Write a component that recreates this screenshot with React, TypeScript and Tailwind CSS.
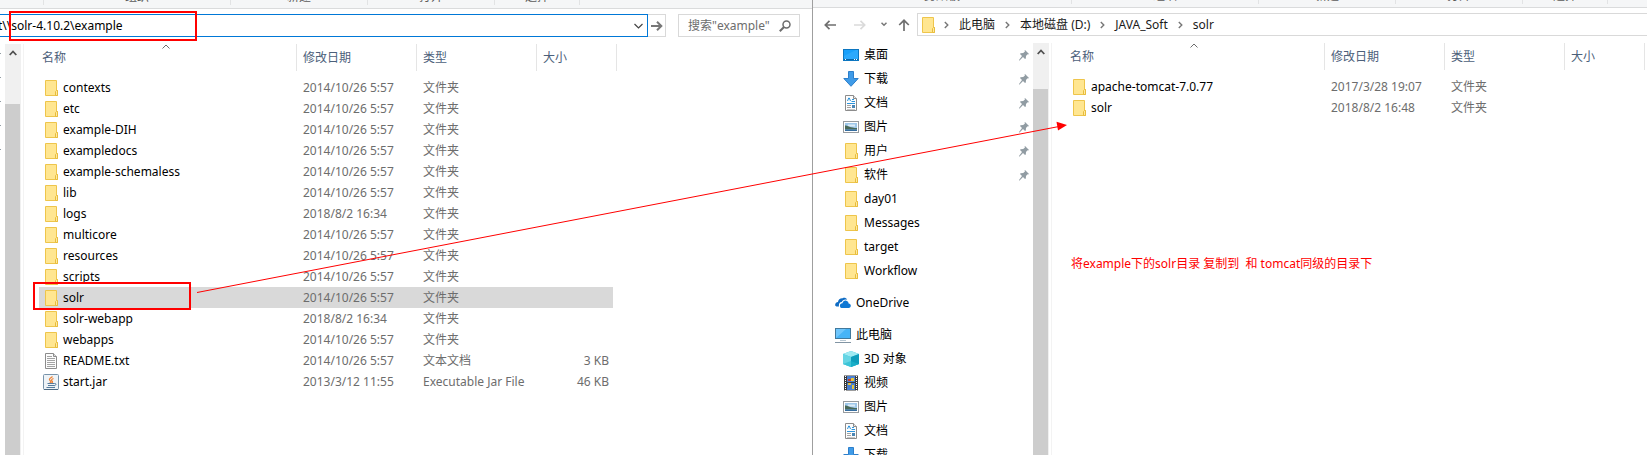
import type { ReactNode } from "react";

type IconName =
  | "folder" | "text" | "jar" | "desktop" | "download" | "document"
  | "picture" | "onedrive" | "pc" | "cube" | "video";

type FileRow = {
  name: string;
  date: string;
  type: string;
  size?: string;
  icon?: IconName;
  selected?: boolean;
};

const exampleFiles: FileRow[] = [
  { name: "contexts", date: "2014/10/26 5:57", type: "文件夹" },
  { name: "etc", date: "2014/10/26 5:57", type: "文件夹" },
  { name: "example-DIH", date: "2014/10/26 5:57", type: "文件夹" },
  { name: "exampledocs", date: "2014/10/26 5:57", type: "文件夹" },
  { name: "example-schemaless", date: "2014/10/26 5:57", type: "文件夹" },
  { name: "lib", date: "2014/10/26 5:57", type: "文件夹" },
  { name: "logs", date: "2018/8/2 16:34", type: "文件夹" },
  { name: "multicore", date: "2014/10/26 5:57", type: "文件夹" },
  { name: "resources", date: "2014/10/26 5:57", type: "文件夹" },
  { name: "scripts", date: "2014/10/26 5:57", type: "文件夹" },
  { name: "solr", date: "2014/10/26 5:57", type: "文件夹", selected: true },
  { name: "solr-webapp", date: "2018/8/2 16:34", type: "文件夹" },
  { name: "webapps", date: "2014/10/26 5:57", type: "文件夹" },
  { name: "README.txt", date: "2014/10/26 5:57", type: "文本文档", size: "3 KB", icon: "text" },
  { name: "start.jar", date: "2013/3/12 11:55", type: "Executable Jar File", size: "46 KB", icon: "jar" },
];

const targetFiles: FileRow[] = [
  { name: "apache-tomcat-7.0.77", date: "2017/3/28 19:07", type: "文件夹" },
  { name: "solr", date: "2018/8/2 16:48", type: "文件夹" },
];

const quickAccess: { label: string; icon: IconName; pinned?: boolean }[] = [
  { label: "桌面", icon: "desktop", pinned: true },
  { label: "下载", icon: "download", pinned: true },
  { label: "文档", icon: "document", pinned: true },
  { label: "图片", icon: "picture", pinned: true },
  { label: "用户", icon: "folder", pinned: true },
  { label: "软件", icon: "folder", pinned: true },
  { label: "day01", icon: "folder" },
  { label: "Messages", icon: "folder" },
  { label: "target", icon: "folder" },
  { label: "Workflow", icon: "folder" },
];

const thisPc: { label: string; icon: IconName }[] = [
  { label: "3D 对象", icon: "cube" },
  { label: "视频", icon: "video" },
  { label: "图片", icon: "picture" },
  { label: "文档", icon: "document" },
  { label: "下载", icon: "download" },
];

const drawings: Record<IconName, ReactNode> = {
  folder: (
    <>
      <path d="M2.5.5h11v10h1v5h-12z" fill="#ffe691" stroke="#eec54b" />
      <path d="M12.5 15.5v-4l1-1h1v5z" fill="#ffe9a0" stroke="#e8bd3c" />
    </>
  ),
  text: (
    <>
      <path d="M2.5.5h8l3 3v12h-11z" fill="#fcfcfc" stroke="#8c8c8c" />
      <path d="M10.5.5v3h3" fill="#ddd" stroke="#8c8c8c" />
      <path d="M4 3.5h5M4 5.5h8M4 7.5h8M4 9.5h8M4 11.5h8M4 13.5h8" stroke="#a3a3a3" />
    </>
  ),
  jar: (
    <>
      <rect x=".5" y=".5" width="15" height="15" rx="1" fill="#eef3f7" stroke="#7793aa" />
      <path d="M1 15.5h14" stroke="#4d6a83" />
      <path d="M9.5 2.5C7 4.5 5.5 5 7 6.5s1 2-.5 2.500M10.500 4.500C8.500 5.500 8 6 9 7s.5 1.500-.5 2" fill="none" stroke="#ee8133" strokeWidth="1.200" />
      <path d="M4.500 9.500h7M5 11.500h6M3.500 13.500h8.500" stroke="#557b9c" strokeWidth="1.200" />
      <path d="M11.500 9.500c2-.5 2 2-.5 2.300" fill="none" stroke="#557b9c" />
    </>
  ),
  desktop: (
    <>
      <rect x=".5" y="2.500" width="15" height="11" fill="#18a0fb" stroke="#0c76c0" />
      <path d="M1 9 13 3h2v9H1z" fill="#42b4ff" opacity=".45" />
      <path d="M1 12.500h14" stroke="#0866a8" />
      <path d="M2 12.500h1M11 12.500h1M13 12.500h1" stroke="#fff" />
    </>
  ),
  download: <path d="M5.500.5h5v7h4.700L8 15.300.8 7.500h4.700z" fill="#3f9be8" stroke="#2d7fcb" />,
  document: (
    <>
      <path d="M2.500.5h8l3 3v12h-11z" fill="#fdfdfd" stroke="#8c8c8c" />
      <path d="M10.500.5v3h3" fill="#e8e8e8" stroke="#8c8c8c" />
      <path d="m4.500 6 1.200-3h.6l1.200 3M9 4.500h2M8.500 6.500H12M4 8.500h8" fill="none" stroke="#2d94dc" />
      <path d="M4 10.500h4M4 12.500h4" stroke="#a3a3a3" />
      <path d="M9 10h3v3H9z" fill="#4a86b5" />
      <path d="M4 14.500h8" stroke="#c8c8c8" />
    </>
  ),
  picture: (
    <>
      <rect x=".5" y="2.500" width="15" height="11" fill="#fff" stroke="#979ca0" />
      <path d="M2 4h12v8H2z" fill="#9fc8ea" />
      <path d="M5 5.500h7v2H5z" fill="#dcecf7" />
      <path d="M2 6.500c3 0 5 2.500 12 2.500v1.500H2z" fill="#4a6a58" />
      <path d="M2 10.500h12V12H2z" fill="#356d9f" />
    </>
  ),
  onedrive: (
    <>
      <path d="M.3 10.800C-.3 8.500 1.300 7 3 7c.2-2.300 2.300-4 4.700-3.700 1-.8 3.500-.6 4.500 1.400-2.600-.8-4.700.3-5.500 2.300C4.500 7 3.500 9 4 11.500H1.500z" fill="#0f6cc4" />
      <path d="M5 11c-.3-1.800 1-3 2.500-2.800C7.900 6 9.800 5.200 11.300 5.700c1.500.4 2.300 1.600 2.300 2.800 2.900.1 3 4.400 0 4.500H6.500C5.600 13 5 12 5 11z" fill="#0f78d4" />
    </>
  ),
  pc: (
    <>
      <rect x=".5" y="1.500" width="15" height="10" fill="#47b4f7" stroke="#42799c" />
      <path d="M1 2h10L1 11z" fill="#8bd2ff" opacity=".6" />
      <path d="M5 13.500h6" stroke="#b9c8d3" />
      <path d="M0 15.500h16" stroke="#8295a4" />
    </>
  ),
  cube: (
    <>
      <path d="m8 0 8 3v10l-8 3-8-3V3z" fill="#35c3dc" />
      <path d="m8 0 8 3-8 3-8-3z" fill="#9feaf2" />
      <path d="m0 3 8 3v10l-8-3z" fill="#66d5e4" />
      <path d="m8 6 8-3v10l-8 3z" fill="#0e9dbb" />
      <path d="m0 13 8-3 8 3-8 3z" fill="#22b9cf" opacity=".6" />
    </>
  ),
  video: (
    <>
      <path d="M1 .5h14v15H1z" fill="#3a3a3a" />
      <path d="M4 1h8v6H4zM4 8h8v7H4z" fill="#4a7fd0" />
      <path d="M5 4h3v2H5z" fill="#c93b2c" />
      <path d="M8 3h3v3H8zM5 8h3v2H5zM9 10h2v4H9z" fill="#e8c53a" />
      <path d="M2.500 1v15M13.500 1v15" stroke="#fff" strokeDasharray="1 1" />
    </>
  ),
};

function Icon({ name }: { name: IconName }) {
  return (
    <svg viewBox="0 0 16 16" className="size-4 shrink-0" aria-hidden="true">
      {drawings[name]}
    </svg>
  );
}

function Pin() {
  return (
    <svg viewBox="0 0 10 11" className="h-[11px] w-2.5 shrink-0" aria-hidden="true">
      <path d="M6 0 10 4 9 4.500 8.500 4.300 7 6 6.800 8.500 6 9 4 7 .6 10.600 0 10.400l.2-.6L3 6 1 4l.6-.8 2.600-.2L6 1.500 5.500.8z" fill="#919ca3" />
    </svg>
  );
}

function ScrollUp() {
  return (
    <svg viewBox="0 0 8 6" className="h-1.5 w-2" aria-hidden="true">
      <path d="m.7 5 3.300-3.500L7.300 5" fill="none" stroke="#505050" strokeWidth="1.800" />
    </svg>
  );
}

function Crumb() {
  return (
    <svg viewBox="0 0 5 8" className="h-2 w-[5px] shrink-0" aria-hidden="true">
      <path d="m.8 1 3 3-3 3" fill="none" stroke="#777" strokeWidth="1.400" />
    </svg>
  );
}

function Ribbon({ children, className }: { children: ReactNode; className: string }) {
  return (
    <div className={`flex shrink-0 items-end overflow-hidden border-b border-[#dadbdc] bg-[#f5f6f7] text-[#5a5a5a] ${className}`}>
      {children}
    </div>
  );
}

function RibbonGroup({ label, className }: { label?: string; className: string }) {
  return (
    <div className={`mb-[3px] flex h-5 shrink-0 items-end justify-center border-r border-[#e2e3e4] leading-4 ${className}`}>
      {label}
    </div>
  );
}

function FileTable({ label, rows, nameWidth }: { label: string; rows: FileRow[]; nameWidth: string }) {
  const head = "border-r border-[#e5e5e5] p-0 pl-1.5 text-left font-normal";
  return (
    <table className="table-fixed border-separate border-spacing-0 self-start" aria-label={label}>
      <colgroup>
        <col className={nameWidth} />
        <col className="w-[120px]" />
        <col className="w-[120px]" />
        <col className="w-[80px]" />
      </colgroup>
      <thead>
        <tr className="h-[27px] text-[#4c607a]">
          <th className="relative border-r border-[#e5e5e5] p-0 pl-[3px] text-left font-normal">
            名称
            <svg viewBox="0 0 8 5" className="absolute top-0 left-1/2 h-[5px] w-2 -translate-x-1.5" aria-hidden="true">
              <path d="m.5 4.500 3.500-3.500 3.500 3.500" fill="none" stroke="#6d6d6d" />
            </svg>
          </th>
          <th className={head}>修改日期</th>
          <th className={head}>类型</th>
          <th className={head}>大小</th>
        </tr>
      </thead>
      <tbody className="text-[#6d6d6d] before:block before:h-1.5">
        {rows.map((row) => {
          const fill = row.selected ? "bg-[#d9d9d9]" : "";
          return (
            <tr key={row.name}>
              <td className="p-0">
                <div className={`flex h-[21px] items-center gap-1 pl-1 text-black ${fill}`}>
                  <Icon name={row.icon ?? "folder"} />
                  {row.name}
                </div>
              </td>
              <td className="p-0">
                <div className={`flex h-[21px] items-center pl-1.5 ${fill}`}>{row.date}</div>
              </td>
              <td className="p-0">
                <div className={`flex h-[21px] items-center pl-1.5 ${fill}`}>{row.type}</div>
              </td>
              <td className="p-0 pr-1">
                <div className={`flex h-[21px] items-center justify-end pr-1 ${fill}`}>{row.size}</div>
              </td>
            </tr>
          );
        })}
      </tbody>
    </table>
  );
}

function SourceWindow() {
  return (
    <section className="flex min-w-0 flex-col overflow-hidden border-r border-[#9f9f9f]">
      <Ribbon className="h-[9px]">
        <RibbonGroup className="w-11" />
        <RibbonGroup label="组织" className="w-[187px]" />
        <RibbonGroup label="新建" className="w-[137px]" />
        <RibbonGroup label="打开" className="w-[127px]" />
        <RibbonGroup label="选择" className="w-[85px]" />
      </Ribbon>
      <div className="mt-[5px] flex h-[23px] shrink-0 pr-3">
        <div className="-ml-1 flex min-w-0 flex-1 items-center border border-[#0078d7] pr-1">
          <input
            aria-label="地址"
            defaultValue={"t\\\\solr-4.10.2\\example"}
            className="min-w-0 flex-1 pl-px text-black outline-none"
          />
          <svg viewBox="0 0 9 6" className="h-1.5 w-[9px]" aria-hidden="true">
            <path d="m.5 1 4 4 4-4" fill="none" stroke="#444" strokeWidth="1.200" />
          </svg>
        </div>
        <button aria-label="转到" className="mr-3 flex w-[18px] items-center justify-center border border-l-0 border-[#d9d9d9]">
          <svg viewBox="0 0 12 10" className="h-2.5 w-3" aria-hidden="true">
            <path d="M0 5h10M6 .8 10.300 5 6 9.200" fill="none" stroke="#777" strokeWidth="2" />
          </svg>
        </button>
        <label className="flex w-[122px] items-center border border-[#d9d9d9] pr-2 pl-[9px]">
          <input
            type="text"
            aria-label="搜索"
            placeholder={'搜索"example"'}
            className="min-w-0 flex-1 outline-none placeholder:text-[#6d6d6d]"
          />
          <svg viewBox="0 0 12 12" className="size-3 shrink-0" aria-hidden="true">
            <circle cx="7.500" cy="4.500" r="3.500" fill="none" stroke="#6d6d6d" strokeWidth="1.500" />
            <path d="M5 7 .8 11.200" stroke="#6d6d6d" strokeWidth="2" />
          </svg>
        </label>
      </div>
      <div className="mt-[7px] flex min-h-0 flex-1">
        <div className="w-[5px] shrink-0 overflow-hidden">
          <div className="flex flex-col gap-[23px] pt-[9px]">
            {[0, 1, 2, 3, 4].map((n) => (
              <span key={n} className="h-px w-px bg-[#919ca3]" />
            ))}
          </div>
        </div>
        <div className="flex w-4 shrink-0 flex-col bg-[#f0f0f0]">
          <div className="flex h-[60px] justify-center pt-1.5"><ScrollUp /></div>
          <div className="mr-px flex-1 bg-[#cdcdcd]" />
        </div>
        <div className="mr-[15px] ml-0.5 w-px shrink-0 bg-[#f3f3f3]" />
        <FileTable label="example" rows={exampleFiles} nameWidth="w-[258px]" />
      </div>
    </section>
  );
}

function TargetWindow() {
  return (
    <section className="flex min-w-0 flex-col overflow-hidden">
      <Ribbon className="h-2">
        <RibbonGroup label="剪贴板" className="w-[259px]" />
        <RibbonGroup label="组织" className="w-[187px]" />
        <RibbonGroup label="新建" className="w-[137px]" />
        <RibbonGroup label="打开" className="w-[127px]" />
        <RibbonGroup label="选择" className="w-[85px]" />
      </Ribbon>
      <div className="mt-[5px] flex h-[23px] shrink-0 items-center">
        <button aria-label="后退" className="ml-[11px]">
          <svg viewBox="0 0 12 10" className="h-2.5 w-3" aria-hidden="true">
            <path d="M12 5H1.500M5.500.8 1.300 5l4.200 4.200" fill="none" stroke="#6f6f6f" strokeWidth="1.700" />
          </svg>
        </button>
        <button aria-label="前进" className="ml-[18px]">
          <svg viewBox="0 0 12 10" className="h-2.5 w-3" aria-hidden="true">
            <path d="M0 5h10.500M6.500.8 10.700 5 6.500 9.200" fill="none" stroke="#dadada" strokeWidth="1.700" />
          </svg>
        </button>
        <button aria-label="最近浏览的位置" className="ml-[15px]">
          <svg viewBox="0 0 6 5" className="h-[5px] w-1.5" aria-hidden="true">
            <path d="m.5.8 2.500 2.500L5.500.8" fill="none" stroke="#777" strokeWidth="1.500" />
          </svg>
        </button>
        <button aria-label="上移" className="ml-[11px]">
          <svg viewBox="0 0 12 12" className="size-3" aria-hidden="true">
            <path d="M6 12V1.500M1.200 6 6 1.300 10.800 6" fill="none" stroke="#6f6f6f" strokeWidth="1.700" />
          </svg>
        </button>
        <nav aria-label="路径" className="ml-[7px] flex h-full flex-1 items-center border border-r-0 border-[#d9d9d9] pl-0.5 text-[#1a1a1a]">
          <Icon name="folder" />
          <span className="ml-2 flex items-center gap-2.5">
            <Crumb /><a href="#pc">此电脑</a>
            <Crumb /><a href="#d">本地磁盘 (D:)</a>
            <Crumb /><a href="#java">JAVA_Soft</a>
            <Crumb /><a href="#solr">solr</a>
          </span>
        </nav>
      </div>
      <div className="mt-[7px] flex min-h-0 flex-1">
        <nav aria-label="导航窗格" className="w-[220px] shrink-0 overflow-hidden text-black">
          <ul className="pr-1 pl-[30px]">
            {quickAccess.map((item) => (
              <li key={item.label} className="flex h-6 items-center gap-[5px]">
                <Icon name={item.icon} />
                <span className="flex-1">{item.label}</span>
                {item.pinned && <Pin />}
              </li>
            ))}
          </ul>
          <div className="mt-2 flex h-6 items-center gap-[5px] pl-[22px]"><Icon name="onedrive" />OneDrive</div>
          <div className="mt-2 flex h-6 items-center gap-[5px] pl-[22px]"><Icon name="pc" />此电脑</div>
          <ul className="pl-[30px]">
            {thisPc.map((item) => (
              <li key={item.label} className="flex h-6 items-center gap-[5px]">
                <Icon name={item.icon} />
                {item.label}
              </li>
            ))}
          </ul>
        </nav>
        <div className="flex w-4 shrink-0 flex-col bg-[#f0f0f0]">
          <div className="flex h-[46px] justify-center pt-1.5"><ScrollUp /></div>
          <div className="mr-px flex-1 bg-[#cdcdcd]" />
        </div>
        <div className="mr-[15px] ml-0.5 w-px shrink-0 bg-[#f3f3f3]" />
        <div className="flex flex-col items-start">
          <FileTable label="solr" rows={targetFiles} nameWidth="w-[258px]" />
          <p className="mt-[136px] ml-1 leading-5 whitespace-pre text-[#f00]">
            {"将example下的solr目录 复制到  和 tomcat同级的目录下"}
          </p>
        </div>
      </div>
    </section>
  );
}

export default function App() {
  return (
    <main className="relative grid h-screen grid-cols-[813fr_834fr] overflow-hidden bg-white font-['Noto_Sans','Noto_Sans_CJK_SC',sans-serif] text-xs">
      <SourceWindow />
      <TargetWindow />
      <div className="pointer-events-none absolute top-[11px] left-[9px] h-[30px] w-[188px] border-2 border-[#f00]" />
      <div className="pointer-events-none absolute top-[282px] left-[33px] h-7 w-[158px] border-2 border-[#f00]" />
      <svg viewBox="0 0 871 172" className="pointer-events-none absolute top-[121px] left-[197px] h-[172px] w-[871px]" aria-hidden="true">
        <path d="M0 171.500 862 5.500" stroke="#f00" fill="none" />
        <path d="M870 4 859.500.8 861 9.500z" fill="#f00" />
      </svg>
    </main>
  );
}
